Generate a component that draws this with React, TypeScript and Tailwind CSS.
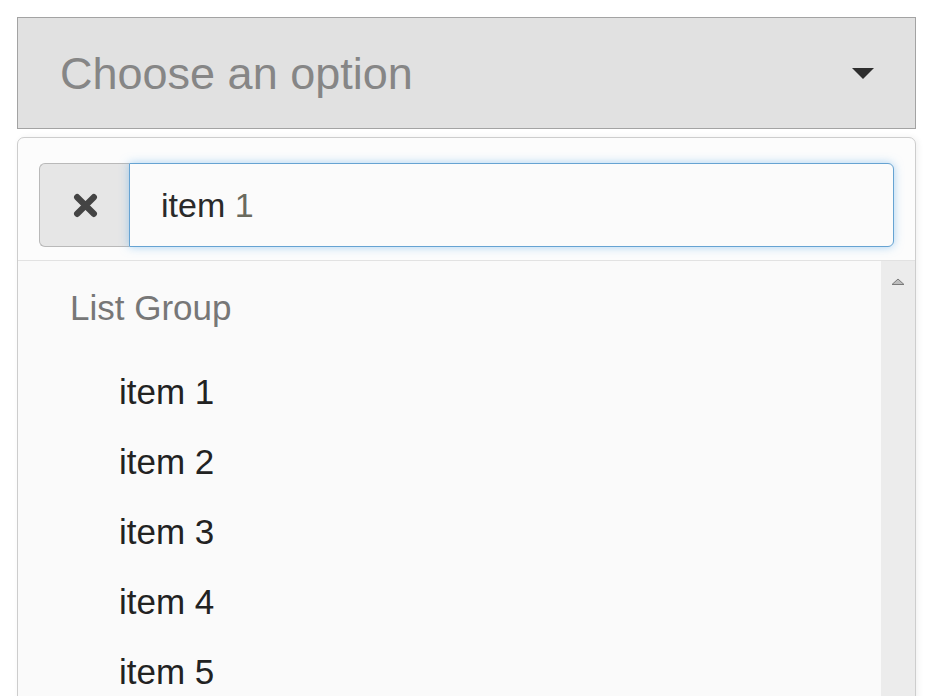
const items = ['item 1', 'item 2', 'item 3', 'item 4', 'item 5']

function ClearIcon() {
  return (
    <svg width="25" height="25" viewBox="0 0 24 24">
      <path d="M4 4 L20 20 M20 4 L4 20" stroke="#444444" strokeWidth="6" strokeLinecap="round" />
    </svg>
  )
}

export default function App() {
  return (
    <div
      className="h-screen overflow-hidden bg-white pl-[17px] pr-[18px] pt-[17px]"
      style={{ fontFamily: '"Liberation Sans", Arial, sans-serif' }}
    >
      {/* select box */}
      <div className="flex h-[112px] items-center justify-between border border-[#a3a3a3] bg-[#e1e1e1] pl-[42px] pr-[41px]">
        <span className="text-[45px] leading-none text-[#868686]">Choose an option</span>
        <span className="h-0 w-0 border-x-[11px] border-t-[11px] border-x-transparent border-t-[#2e2e2e]" />
      </div>

      {/* dropdown */}
      <div className="mt-[8px] h-[600px] rounded-t-[7px] border border-[#cdcdcd] bg-[#fcfcfc] shadow-[2px_0_6px_rgba(0,0,0,0.06)]">
        <div className="border-b border-[#e2e2e2] px-[21px] pb-[13px] pt-[25px]">
          <div className="flex h-[84px]">
            <div className="flex w-[90px] items-center justify-center rounded-l-[6px] border border-r-0 border-[#b9b9b9] bg-[#e6e6e6] pl-[2px]">
              <ClearIcon />
            </div>
            <div className="flex flex-1 items-center rounded-r-[6px] border border-[#66a3d2] bg-[#fbfbfb] pl-[31px] text-[34px] shadow-[0_0_10px_rgba(102,175,233,0.55)]">
              <span className="text-[#2a2a2a]">item&nbsp;</span>
              <span className="text-[#6a6a5e]">1</span>
            </div>
          </div>
        </div>

        <div className="flex h-full">
          <div className="flex-1 bg-[#fafafa] pt-[12px]">
            <div className="h-[70px] pl-[52px] text-[35px] leading-[70px] text-[#777777]">List Group</div>
            <div className="mt-[14px]">
              {items.map((it) => (
                <div key={it} className="h-[70px] pl-[101px] text-[35px] leading-[70px] text-[#222222]">
                  {it}
                </div>
              ))}
            </div>
          </div>
          <div className="flex w-[34px] justify-center bg-[#ececec] pt-[17px]">
            <svg width="14" height="7" viewBox="0 0 14 7">
              <path d="M1 6.5 L7 1 L13 6.5 Z" fill="#bdbdbd" stroke="#7a7a7a" strokeWidth="1" />
            </svg>
          </div>
        </div>
      </div>
    </div>
  )
}
